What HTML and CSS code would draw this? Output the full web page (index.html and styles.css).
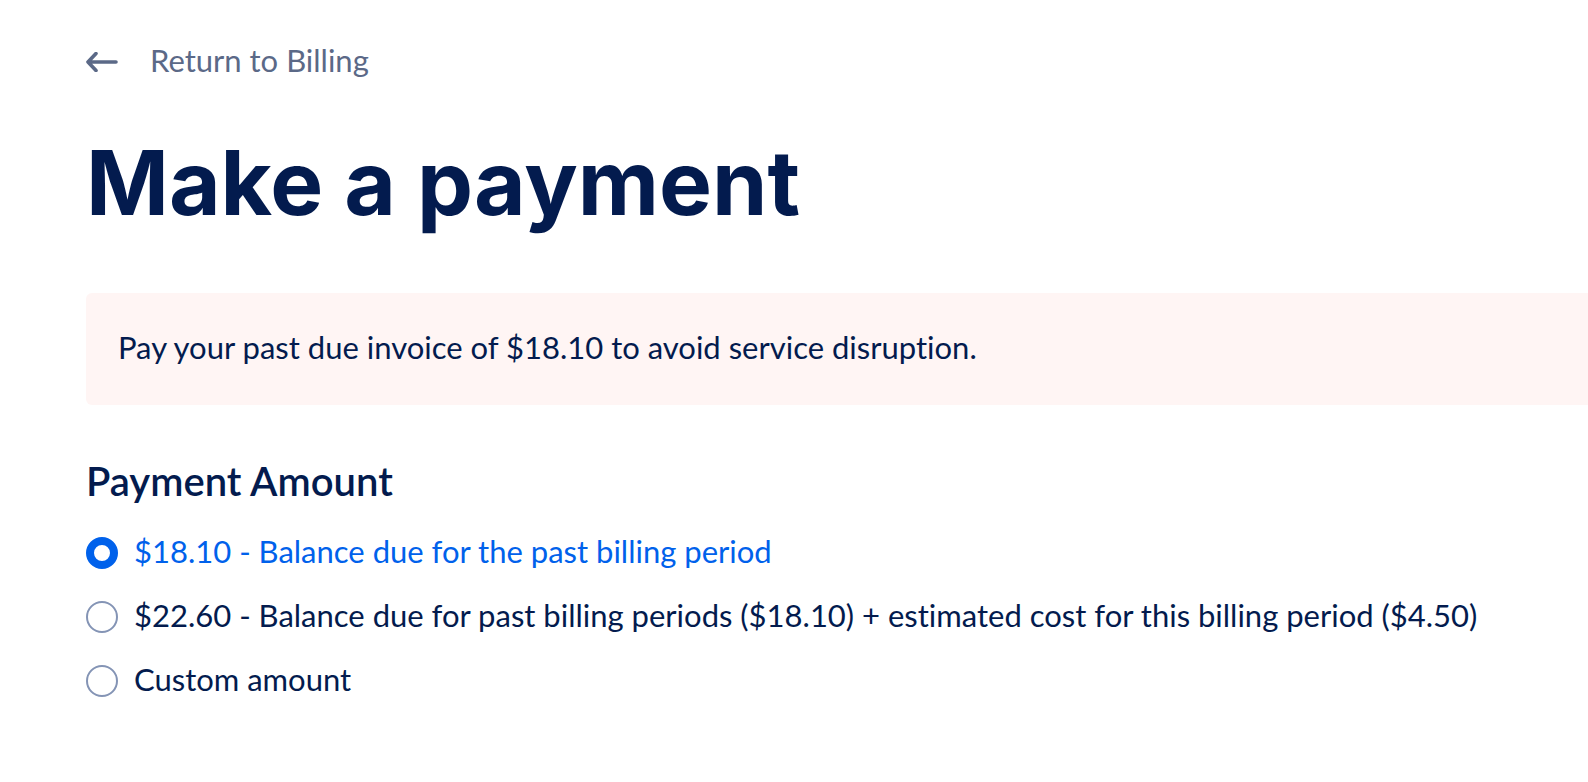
FILE: index.html
```html
<!DOCTYPE html>
<html lang="en">
<head>
<meta charset="utf-8">
<title>Make a payment</title>
<link rel="stylesheet" href="styles.css">
</head>
<body>
<main class="page">
  <a class="back" href="#billing">
    <svg class="back-icon" viewBox="0 0 32 20" aria-hidden="true"><path d="M30 10H2.5M10 1.5L2 10l8 8.5"/></svg>
    <span>Return to Billing</span>
  </a>
  <h1 class="title">Make a payment</h1>
  <p class="notice">Pay your past due invoice of $18.10 to avoid service disruption.</p>
  <form>
    <fieldset class="amounts">
      <legend class="amounts-title">Payment Amount</legend>
      <label class="option"><input class="radio" type="radio" name="amount" checked><span>$18.10 - Balance due for the past billing period</span></label>
      <label class="option"><input class="radio" type="radio" name="amount"><span>$22.60 - Balance due for past billing periods ($18.10) + estimated cost for this billing period ($4.50)</span></label>
      <label class="option"><input class="radio" type="radio" name="amount"><span>Custom amount</span></label>
    </fieldset>
  </form>
</main>
</body>
</html>
```
FILE: styles.css
```css
* { box-sizing: border-box; }
body {
  margin: 0;
  background: #fff;
  color: #031b4e;
  font-family: Lato, sans-serif;
  font-size: 31px;
  line-height: 40px;
  font-variant-ligatures: none;
}
.page { padding: 40px 0 40px 86px; }
.back {
  display: flex;
  width: fit-content;
  align-items: center;
  gap: 32px;
  color: #5b6987;
  text-decoration: none;
}
.back-icon {
  width: 32px;
  height: 20px;
  margin-top: 4px;
  fill: none;
  stroke: currentColor;
  stroke-width: 3.6;
  stroke-linecap: round;
  stroke-linejoin: round;
}
.title {
  margin: 44px 0 52px;
  font-family: Inter, sans-serif;
  font-size: 89px;
  line-height: 117px;
  font-weight: 700;
}
.notice {
  margin: 0;
  padding: 34px 32px 38px;
  border-radius: 6px 0 0 6px;
  background: #fff5f4;
}
.amounts { margin: 52px 0 0; padding: 0; border: 0; min-width: 0; }
.amounts-title {
  padding: 0;
  margin-bottom: 26px;
  font-size: 40px;
  line-height: 48px;
  font-weight: 600;
}
.option {
  display: flex;
  align-items: center;
  gap: 16px;
  margin-bottom: 24px;
}
.option:has(:checked) { color: #0061eb; }
.radio {
  appearance: none;
  flex: none;
  width: 32px;
  height: 32px;
  margin: 4px 0 0;
  border: 2px solid #8494b5;
  border-radius: 50%;
  background: #fff;
}
.radio:checked { border: 8px solid #0061eb; }
```
